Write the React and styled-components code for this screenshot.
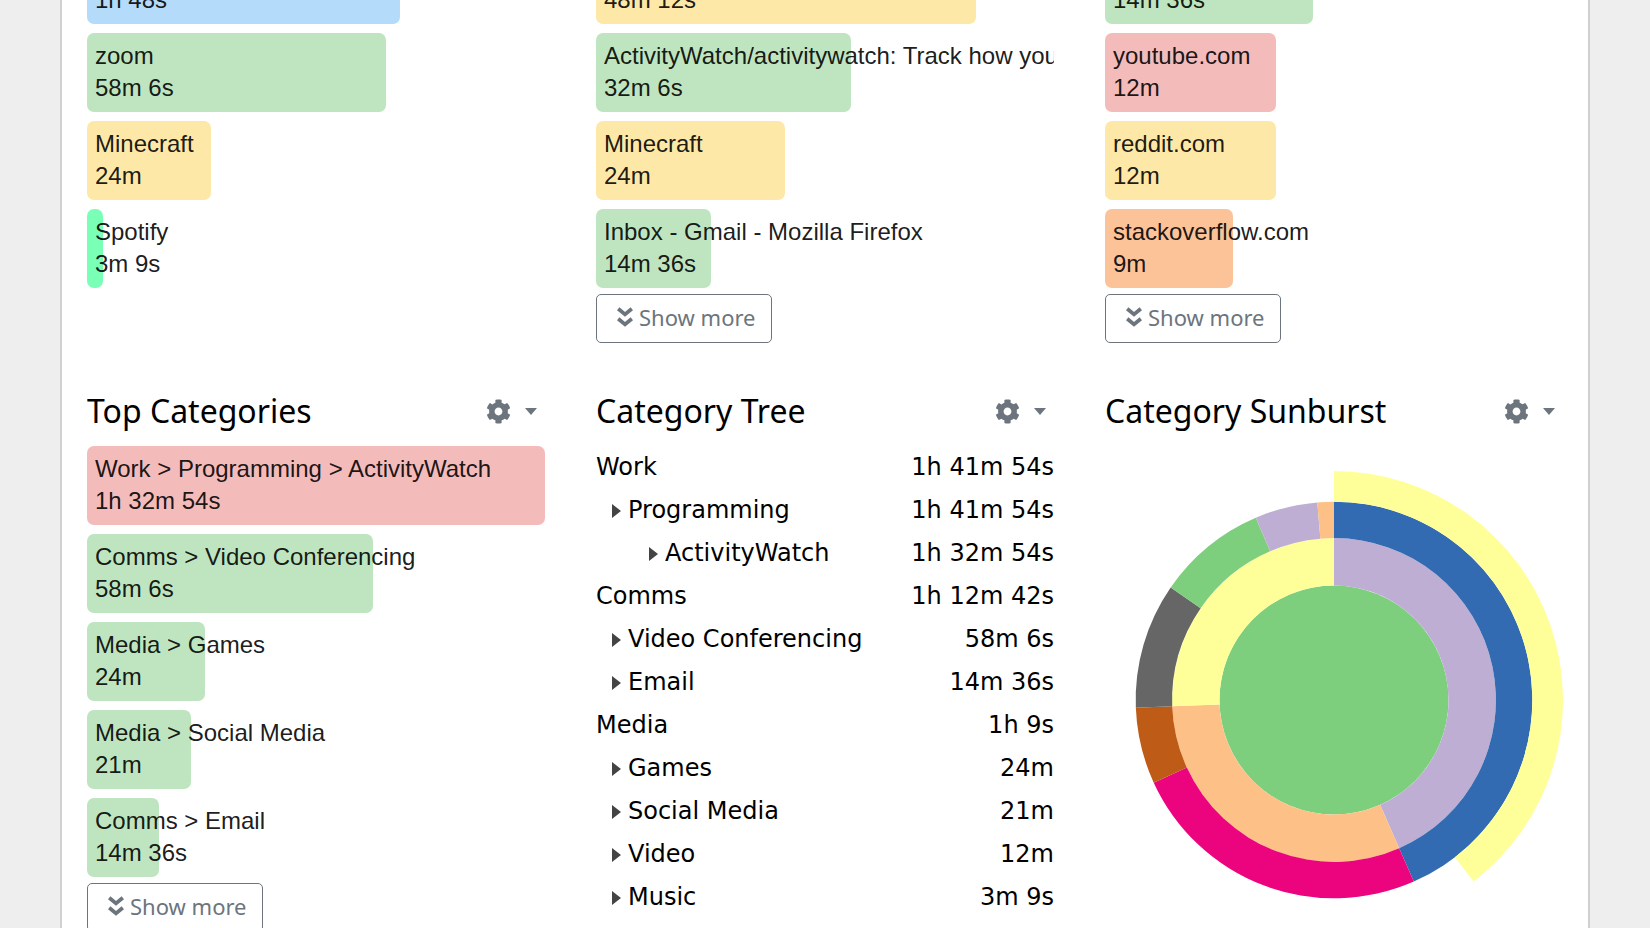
import React from 'react';
import styled, { createGlobalStyle } from 'styled-components';
import { FaCog } from 'react-icons/fa';

const GREEN = '#bee5bf';
const YELLOW = '#fde8a7';
const RED = '#f4bbbb';
const ORANGE = '#fcc298';
const BLUE = '#b4dbf9';
const SPOTIFY = '#7affb7';

const applications = {
  max: 5334,
  items: [
    { time: 3648, color: BLUE },
    { name: 'zoom', time: 3486, color: GREEN },
    { name: 'Minecraft', time: 1440, color: YELLOW },
    { name: 'Spotify', time: 189, color: SPOTIFY },
  ],
};

const titles = {
  max: 3486,
  items: [
    { time: 2892, color: YELLOW },
    {
      name: 'ActivityWatch/activitywatch: Track how you',
      time: 1926,
      color: GREEN,
    },
    { name: 'Minecraft', time: 1440, color: YELLOW },
    { name: 'Inbox - Gmail - Mozilla Firefox', time: 876, color: GREEN },
  ],
};

const domains = {
  max: 1926,
  items: [
    { time: 876, color: GREEN },
    { name: 'youtube.com', time: 720, color: RED },
    { name: 'reddit.com', time: 720, color: YELLOW },
    { name: 'stackoverflow.com', time: 540, color: ORANGE },
  ],
};

const categories = {
  max: 5574,
  items: [
    { name: 'Work > Programming > ActivityWatch', time: 5574, color: RED },
    { name: 'Comms > Video Conferencing', time: 3486, color: GREEN },
    { name: 'Media > Games', time: 1440, color: GREEN },
    { name: 'Media > Social Media', time: 1260, color: GREEN },
    { name: 'Comms > Email', time: 876, color: GREEN },
  ],
};

const tree = [
  { name: 'Work', time: 6114, depth: 0 },
  { name: 'Programming', time: 6114, depth: 1 },
  { name: 'ActivityWatch', time: 5574, depth: 2 },
  { name: 'Comms', time: 4362, depth: 0 },
  { name: 'Video Conferencing', time: 3486, depth: 1 },
  { name: 'Email', time: 876, depth: 1 },
  { name: 'Media', time: 3609, depth: 0 },
  { name: 'Games', time: 1440, depth: 1 },
  { name: 'Social Media', time: 1260, depth: 1 },
  { name: 'Video', time: 720, depth: 1 },
  { name: 'Music', time: 189, depth: 1 },
];

// ring, start and end in seconds of the total
const TOTAL = 14085;
const slices = [
  { ring: 1, from: 0, to: 6114, color: '#beaed4' },
  { ring: 1, from: 6114, to: 10476, color: '#fdc086' },
  { ring: 1, from: 10476, to: 14085, color: '#ffff99' },
  { ring: 2, from: 0, to: 6114, color: '#326bb1' },
  { ring: 2, from: 6114, to: 9600, color: '#ec047f' },
  { ring: 2, from: 9600, to: 10476, color: '#bd5b17' },
  { ring: 2, from: 10476, to: 11916, color: '#666666' },
  { ring: 2, from: 11916, to: 13176, color: '#7ecf7d' },
  { ring: 2, from: 13176, to: 13896, color: '#beaed4' },
  { ring: 2, from: 13896, to: 14085, color: '#fdc086' },
  { ring: 3, from: 0, to: 5574, color: '#ffff99' },
];

const formatTime = seconds => {
  const h = Math.floor(seconds / 3600);
  const m = Math.floor((seconds % 3600) / 60);
  const s = seconds % 60;
  return [h && `${h}h`, m && `${m}m`, s && `${s}s`].filter(Boolean).join(' ');
};

const RADIUS = 229;

const arc = ({ ring, from, to }) => {
  const inner = RADIUS * Math.sqrt(ring / 4);
  const outer = RADIUS * Math.sqrt((ring + 1) / 4);
  const a = (from / TOTAL) * 2 * Math.PI;
  const b = (to / TOTAL) * 2 * Math.PI;
  const large = b - a > Math.PI ? 1 : 0;
  const point = (r, t) => `${r * Math.sin(t)} ${-r * Math.cos(t)}`;
  return `M${point(outer, a)}A${outer} ${outer} 0 ${large} 1 ${point(outer, b)}
    L${point(inner, b)}A${inner} ${inner} 0 ${large} 0 ${point(inner, a)}Z`;
};

const BarList = ({ data }) => (
  <Bars>
    {data.items.map(({ name, time, color }, id) => (
      <Bar key={id}>
        <Fill color={color} style={{ width: `${(time / data.max) * 100}%` }} />
        <BarText>
          {name && <span>{name}</span>}
          <span>{formatTime(time)}</span>
        </BarText>
      </Bar>
    ))}
  </Bars>
);

const ShowMore = () => (
  <MoreButton type="button">
    <svg width="16" height="20" viewBox="0 0 16 20" aria-hidden="true">
      <path
        d="M1.2 1.8L8 7.4l6.8-5.6M1.2 11.8L8 17.4l6.8-5.6"
        fill="none"
        stroke="currentColor"
        strokeWidth="3.8"
      />
    </svg>
    Show more
  </MoreButton>
);

const Heading = ({ children }) => (
  <Header>
    <Title>{children}</Title>
    <Settings type="button" aria-label={`${children} settings`}>
      <FaCog size={25} />
      <Caret />
    </Settings>
  </Header>
);

const Tree = () => (
  <Table>
    <tbody>
      {tree.map(({ name, time, depth }) => (
        <tr key={name}>
          <NameCell scope="row" $depth={depth}>
            {depth > 0 && <Arrow />}
            {name}
          </NameCell>
          <TimeCell>{formatTime(time)}</TimeCell>
        </tr>
      ))}
    </tbody>
  </Table>
);

const Sunburst = () => (
  <Chart viewBox="-229 -229 458 458" role="img" aria-label="Category Sunburst">
    <circle r={RADIUS / 2} fill="#7ecf7d" />
    {slices.map((slice, id) => (
      <path key={id} d={arc(slice)} fill={slice.color} />
    ))}
  </Chart>
);

const App = () => (
  <Page>
    <GlobalStyle />
    <Container>
      <Grid>
        <section>
          <BarList data={applications} />
        </section>
        <section>
          <BarList data={titles} />
          <ShowMore />
        </section>
        <section>
          <BarList data={domains} />
          <ShowMore />
        </section>
      </Grid>
      <Grid>
        <section>
          <Heading>Top Categories</Heading>
          <BarList data={categories} />
          <ShowMore />
        </section>
        <section>
          <Heading>Category Tree</Heading>
          <Tree />
        </section>
        <section>
          <Heading>Category Sunburst</Heading>
          <Sunburst />
        </section>
      </Grid>
    </Container>
  </Page>
);

const GlobalStyle = createGlobalStyle`
  * {
    box-sizing: border-box;
  }
  body {
    margin: 0;
    background: #eee;
    color: #000;
    font-family: 'Noto Sans', sans-serif;
  }
`;

const Page = styled.div`
  height: 100vh;
  overflow: hidden;
  padding: 0 60px;
`;

/* the page is scrolled, so the first bars start above the window */
const Container = styled.main`
  display: flex;
  flex-direction: column;
  gap: 47px;
  margin-top: -55px;
  padding: 0 25px 25px;
  border: solid #d0d0d0;
  border-width: 0 2px;
  background: #fff;
`;

const Grid = styled.div`
  display: grid;
  grid-template-columns: repeat(3, minmax(0, 1fr));
  gap: 51px;
`;

const Bars = styled.div`
  display: flex;
  flex-direction: column;
  gap: 9px;
`;

const Bar = styled.div`
  display: grid;
  height: 79px;
  overflow: hidden;
`;

const Fill = styled.div`
  grid-area: 1 / 1;
  border-radius: 7px;
  background: ${props => props.color};
`;

const BarText = styled.div`
  grid-area: 1 / 1;
  display: flex;
  flex-direction: column;
  justify-content: flex-end;
  padding: 7px 0 8px 8px;
  color: rgba(0, 0, 0, 0.9);
  font-family: 'Liberation Sans', Arial, sans-serif;
  font-size: 24px;
  line-height: 32px;
  white-space: nowrap;
`;

const MoreButton = styled.button`
  display: flex;
  align-items: center;
  gap: 6px;
  height: 49px;
  margin-top: 6px;
  padding: 0 15px 3px 20px;
  border: 1px solid #6c757d;
  border-radius: 5px;
  background: none;
  color: #6c757d;
  font-family: inherit;
  font-size: 22px;
`;

const Header = styled.header`
  display: flex;
  align-items: center;
  justify-content: space-between;
  margin-bottom: 14px;
`;

const Title = styled.h2`
  margin: 0;
  font-size: 32px;
  font-weight: 400;
  line-height: 42px;
`;

const Settings = styled.button`
  display: flex;
  align-items: center;
  gap: 14px;
  padding: 0 8px 0 0;
  border: 0;
  background: none;
  color: #6c757d;
`;

const Caret = styled.span`
  border: 6px solid transparent;
  border-top: 7px solid;
  border-bottom: 0;
`;

const Table = styled.table`
  width: 100%;
  border-collapse: collapse;
  font-family: 'DejaVu Sans', sans-serif;
  font-size: 24px;
  line-height: 43px;
`;

const NameCell = styled.th`
  padding: 0 0 0 ${props => [0, 16, 53][props.$depth]}px;
  font-weight: 400;
  text-align: left;
`;

const TimeCell = styled.td`
  padding: 0;
  text-align: right;
`;

const Arrow = styled.span`
  display: inline-block;
  margin-right: 7px;
  border: 7px solid transparent;
  border-left: 9px solid #444;
  border-right: 0;
`;

const Chart = styled.svg`
  display: block;
  width: 100%;
  margin-top: 39px;
`;

export default App;
